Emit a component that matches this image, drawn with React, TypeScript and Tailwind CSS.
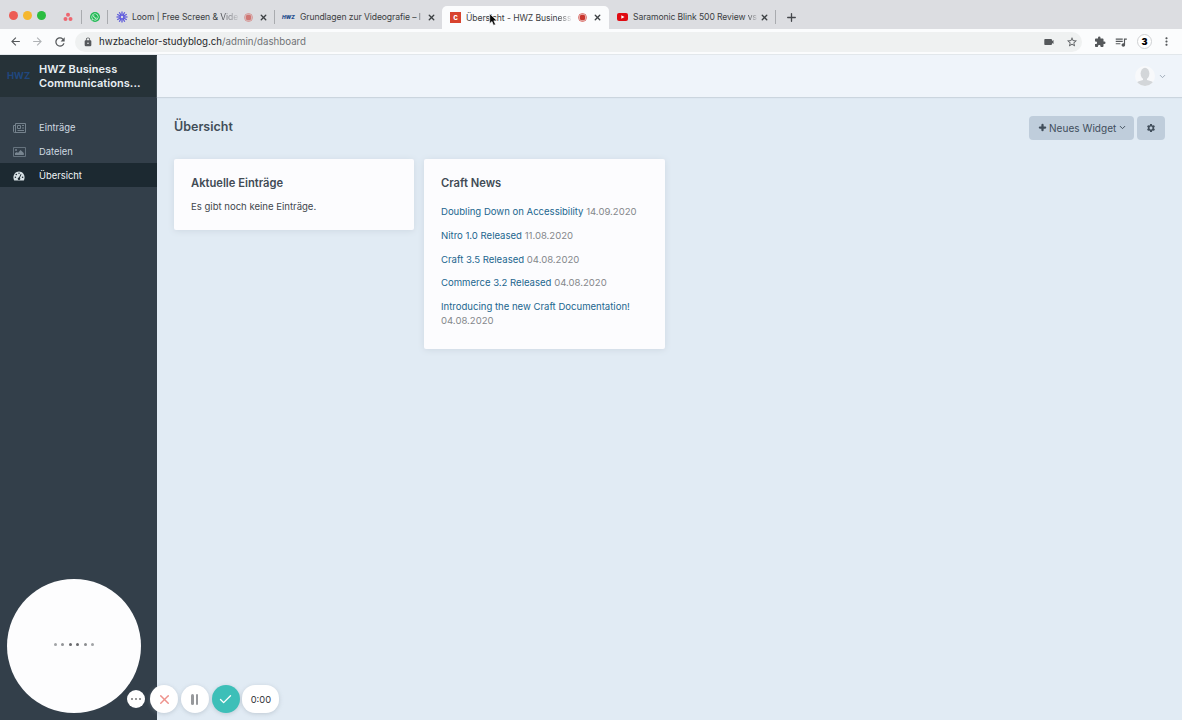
import React from "react";
import {
  MdArrowBack, MdArrowForward, MdRefresh, MdLock, MdStarBorder, MdExtension,
  MdQueueMusic, MdMoreVert, MdSettings,
} from "react-icons/md";
import { FaWhatsapp } from "react-icons/fa";
import { Check, ChevronDown, Plus, X } from "lucide-react";

const news = [
  ["Doubling Down on Accessibility", "14.09.2020"],
  ["Nitro 1.0 Released", "11.08.2020"],
  ["Craft 3.5 Released", "04.08.2020"],
  ["Commerce 3.2 Released", "04.08.2020"],
  ["Introducing the new Craft Documentation!", "04.08.2020"],
];

function Recording({ faded }: { faded?: boolean }) {
  return (
    <svg className={faded ? "size-[9px] shrink-0 opacity-60" : "size-[9px] shrink-0"} viewBox="0 0 9 9">
      <circle cx="4.5" cy="4.5" r="4" fill="none" stroke="#cf4a43" strokeWidth="0.8" />
      <circle cx="4.5" cy="4.5" r="2.9" fill="#c9352d" />
    </svg>
  );
}

function Divider() {
  return <div className="h-[14px] w-px shrink-0 bg-[#a9abaf]" />;
}

function TabClose() {
  return <X className="size-[9px] shrink-0 text-[#3c4043]" strokeWidth={3.6} />;
}

function TabText({ children, className }: { children: React.ReactNode; className: string }) {
  return (
    <span className={"shrink-0 whitespace-nowrap text-[8.6px] leading-[14px] text-[#3b3d42] " + className}>
      {children}
    </span>
  );
}

function Fade({ children }: { children: string }) {
  return <span className="bg-linear-to-r from-[#3b3d42] to-[#3b3d4220] bg-clip-text text-transparent">{children}</span>;
}

function TabBar() {
  return (
    <div className="relative flex h-[29px] shrink-0 bg-[#dcdde1] pt-[6px]">
      <div className="flex h-[22px] w-[442px] shrink-0 items-center">
        <div className="-mt-[4px] ml-[9px] flex gap-[5px]">
          <i className="size-[9px] rounded-full bg-[#ed5c55]" />
          <i className="size-[9px] rounded-full bg-[#f5b72f]" />
          <i className="size-[9px] rounded-full bg-[#2bbd40]" />
        </div>
        <svg className="ml-[17px] size-[10px]" viewBox="0 0 10 10" fill="#ed6670">
          <circle cx="5" cy="2.7" r="2" /><circle cx="2.5" cy="7.1" r="2" /><circle cx="7.5" cy="7.1" r="2" />
        </svg>
        <div className="ml-[8px]"><Divider /></div>
        <span className="ml-[8px] flex size-[10px] items-center justify-center rounded-full bg-[#20b954]">
          <FaWhatsapp className="size-[8px] text-white" />
        </span>
        <div className="ml-[7px]"><Divider /></div>
        <svg className="ml-[8px] size-[12px]" viewBox="-6 -6 12 12" stroke="#5f5bda" strokeWidth="1.3">
          {[0, 30, 60, 90, 120, 150].map((angle) => (
            <path key={angle} d="M-5.5 0H5.5" transform={`rotate(${angle})`} />
          ))}
          <circle r="2.5" fill="#625de0" stroke="none" />
          <circle r="1.2" fill="#dcdde1" stroke="none" />
        </svg>
        <TabText className="ml-[4px] w-[108px] tracking-[-0.07px]">Loom | Free Screen &amp; <Fade>Vide</Fade></TabText>
        <div className="ml-[4px] flex"><Recording faded /></div>
        <div className="ml-[6px] flex"><TabClose /></div>
        <div className="ml-[6px]"><Divider /></div>
        <span className="ml-[7px] w-[13px] text-[5px] leading-none font-black text-[#2b5290] italic">HWZ</span>
        <TabText className="ml-[5px] w-[121px] tracking-[-0.09px]">Grundlagen zur Videografie – <Fade>I</Fade></TabText>
        <div className="ml-[6px] flex"><TabClose /></div>
      </div>
      <div className="relative flex h-[23px] w-[167px] shrink-0 items-center rounded-t-[5px] bg-[#fbfcfd]">
        <span className="ml-[8px] flex size-[11px] items-center justify-center bg-[#d8432e] pb-px text-[8px] font-bold text-white">c</span>
        <TabText className="ml-[5px] w-[108px] tracking-[-0.08px]">Übersicht - HWZ Busin<Fade>ess</Fade></TabText>
        <div className="ml-[4px] flex"><Recording /></div>
        <div className="ml-[6px] flex"><TabClose /></div>
      </div>
      <div className="flex h-[22px] items-center">
        <svg className="ml-[8px] h-[8px] w-[11px]" viewBox="0 0 11 8">
          <rect width="11" height="8" rx="2" fill="#e00b12" /><path d="M4.3 2.2L7.5 4 4.3 5.8Z" fill="white" />
        </svg>
        <TabText className="ml-[5px] w-[124px] tracking-[-0.1px]">Saramonic Blink 500 Review <Fade>vs</Fade></TabText>
        <div className="ml-[3px] flex"><TabClose /></div>
        <div className="ml-[6px]"><Divider /></div>
        <Plus className="ml-[9px] size-[13px] text-[#45474c]" strokeWidth={2.4} />
      </div>
      <svg className="absolute top-[13px] left-[489px] h-[14px] w-[9px]" viewBox="0 0 9 14">
        <path d="M.7.7V10.6L3 8.5 4.5 12.3 6.5 11.4 4.8 7.8H8Z" fill="#080808" stroke="white" strokeWidth=".6" />
      </svg>
    </div>
  );
}

function Toolbar() {
  return (
    <div className="flex h-[26px] shrink-0 items-center border-b border-[#e2e7eb] bg-[#fbfcfd] text-[#55585b]">
      <MdArrowBack className="ml-[9px] size-[13px]" />
      <MdArrowForward className="ml-[9px] size-[13px] text-[#afb2b5]" />
      <MdRefresh className="ml-[9px] size-[14px]" />
      <div className="ml-[8px] flex h-[20px] w-[1007px] items-center rounded-full bg-[#eff1f1]">
        <MdLock className="ml-[8px] size-[10px]" />
        <span className="ml-[6px] pt-[1.5px] text-[9.7px] tracking-[0.01px] text-[#707376]"><span className="text-[#242629]">hwzbachelor-studyblog.ch</span>/admin/dashboard</span>
        <svg className="ml-auto h-[8px] w-[10px]" viewBox="0 0 10 8" fill="#55585b"><path d="M1 1H7Q8 1 8 2V3L9.5 2V6L8 5V6Q8 7 7 7H1Q.3 7 .3 6V2Q.3 1 1 1Z" /></svg>
        <MdStarBorder className="mr-[4px] ml-[12px] size-[12px]" />
      </div>
      <MdExtension className="ml-[12px] size-[12px]" />
      <MdQueueMusic className="ml-[8px] size-[14px]" />
      <span className="ml-[9px] flex size-[15px] items-center justify-center rounded-full border border-[#cfd1d3] bg-white text-[9px] font-black text-black">3</span>
      <MdMoreVert className="ml-[8px] size-[13px]" />
    </div>
  );
}

function NavItem({ label, icon, active }: { label: string; icon: React.ReactNode; active?: boolean }) {
  return (
    <div className={active ? "flex h-[24px] items-center bg-[#1c2931] pt-px text-[#f0f6f8]" : "flex h-[24px] items-center pt-px text-[#d0dae1]"}>
      <span className="ml-[12px] flex w-[14px] justify-center">{icon}</span>
      <span className="ml-[13px] pt-px text-[9.4px]">{label}</span>
    </div>
  );
}

function Sidebar() {
  return (
    <aside className="w-[157px] shrink-0 bg-[#333f4a]">
      <div className="flex h-[42px] items-center bg-[#263238]">
        <span className="ml-[7px] w-[24px] text-[9.5px] font-bold text-[#20477e]">HWZ</span>
        <span className="ml-[8px] text-[11px] leading-[14px] font-semibold tracking-[0.06px] whitespace-nowrap text-[#e8eff3]">HWZ Business<br />Communications...</span>
      </div>
      <nav className="pt-[18px]">
        <NavItem label="Einträge" icon={
          <svg className="h-[10px] w-[13px]" viewBox="0 0 13 10" fill="none" stroke="#75828d">
            <path d="M2.5.5H12.5V9.5H1.5Q.5 9.5.5 8.5V2.5H2.5ZM2.5 2V9" /><path d="M4.5 2.5H7.5V5.5H4.5ZM9 2.5H11M9 5H11M4.5 7.5H11" />
          </svg>
        } />
        <NavItem label="Dateien" icon={
          <svg className="h-[10px] w-[13px]" viewBox="0 0 13 10" fill="#788590">
            <path d="M.5.5H12.5V9.5H.5Z" fill="none" stroke="#66737e" /><circle cx="3" cy="3" r="1" /><path d="M2 8V6L4 5 5 6 7.5 3 10.8 6V8Z" />
          </svg>
        } />
        <NavItem active label="Übersicht" icon={
          <svg className="h-[10px] w-[12px]" viewBox="0 0 12 10">
            <path d="M1.2 9.5C-.9 5.5 1.5.5 6 .5s6.9 5 4.8 9Z" fill="#d7e1e5" />
            <g fill="#1c2931"><circle cx="2.4" cy="6.2" r=".8" /><circle cx="3.3" cy="3.5" r=".8" /><circle cx="6" cy="2.3" r=".7" /><circle cx="9.6" cy="6.2" r=".8" /><circle cx="6" cy="7.7" r="1.3" /></g>
            <path d="M6 7.7L8 3.2" stroke="#1c2931" />
          </svg>
        } />
      </nav>
    </aside>
  );
}

function RecorderControls() {
  return (
    <div className="absolute bottom-[7px] left-[7px] flex items-end">
      <div className="flex size-[134px] items-center justify-center gap-[4.6px] rounded-full bg-[#fdfdfe] pb-[3px]">
        <i className="size-[3px] rounded-full bg-[#a1a3a6]" />
        <i className="size-[3px] rounded-full bg-[#929497]" />
        <i className="size-[3px] rounded-full bg-[#68696c]" />
        <i className="size-[3px] rounded-full bg-[#68696c]" />
        <i className="size-[3px] rounded-full bg-[#8a8c8f]" />
        <i className="size-[3px] rounded-full bg-[#a1a3a6]" />
      </div>
      <div className="mb-[5px] -ml-[14px] flex size-[18px] items-center justify-center gap-[2px] rounded-full bg-white">
        <i className="size-[2px] rounded-full bg-[#777]" /><i className="size-[2px] rounded-full bg-[#777]" /><i className="size-[2px] rounded-full bg-[#777]" />
      </div>
      <div className="ml-[5px] flex gap-[2.8px]">
        <div className="flex size-[28px] items-center justify-center rounded-full bg-white shadow-[0_1px_4px_#8d99a566]"><X className="size-[15px] text-[#ee928c]" strokeWidth={2.4} /></div>
        <div className="flex size-[28px] items-center justify-center gap-[2px] rounded-full bg-white shadow-[0_1px_4px_#8d99a566]"><i className="h-[11px] w-[2.5px] rounded bg-[#97999c]" /><i className="h-[11px] w-[2.5px] rounded bg-[#97999c]" /></div>
        <div className="flex size-[28px] items-center justify-center rounded-full bg-[#3dbfb8] shadow-[0_1px_4px_#8d99a566]"><Check className="size-[15px] text-white" strokeWidth={2.2} /></div>
        <div className="flex h-[28px] w-[37px] items-center justify-center rounded-[13px] bg-white pt-px text-[9.3px] text-[#303236] shadow-[0_1px_4px_#8d99a566]">0:00</div>
      </div>
    </div>
  );
}

export default function App() {
  return (
    <div className="relative flex h-[720px] w-[1182px] flex-col overflow-hidden bg-[#e1ebf4] font-['Inter',sans-serif]">
      <TabBar />
      <Toolbar />
      <div className="flex min-h-0 grow">
        <Sidebar />
        <div className="grow">
          <header className="flex h-[42px] items-center justify-end bg-[#eff4fa] shadow-[0_1px_1px_#cbd5de]">
            <svg className="size-[20px]" viewBox="0 0 20 20">
              <defs><clipPath id="avatar"><circle cx="10" cy="10" r="10" /></clipPath></defs>
              <g clipPath="url(#avatar)"><path d="M0 0H20V20H0Z" fill="#f8f9fb" /><ellipse cx="10" cy="7.6" rx="4.4" ry="5.8" fill="#d3d6d9" /><path d="M8 11H12V14L17 15.5 20 18V20H0V18L3 15.5 8 14Z" fill="#d3d6d9" /></g>
            </svg>
            <ChevronDown className="mr-[15px] ml-[3px] size-[9px] text-[#9daab7]" strokeWidth={2.6} />
          </header>
          <main className="px-[17px]">
            <div className="flex h-[61.5px] items-center">
              <h1 className="pb-[1px] text-[12.5px] font-semibold text-[#414d58]">Übersicht</h1>
              <div className="ml-auto flex h-[24px] gap-[3px] text-[#414e5b]">
                <button className="flex w-[105px] items-center rounded-[4px] bg-[#bfcddb] pl-[9px] text-[10px] tracking-[0.05px]"><Plus className="mr-[2px] size-[9px]" strokeWidth={6} /><span className="pt-px">Neues Widget</span><ChevronDown className="ml-[2px] size-[9px]" strokeWidth={2.6} /></button>
                <button className="flex w-[28px] items-center justify-center rounded-[4px] bg-[#bfcddb]"><MdSettings className="size-[10px]" /></button>
              </div>
            </div>
            <div className="flex items-start gap-[10px]">
              <section className="h-[71.5px] w-[240px] rounded-[2px] bg-[#fcfcfe] px-[17px] pt-[16.5px] shadow-[0_1px_6px_#ced8e2]">
                <h2 className="text-[11.2px] leading-[16px] font-semibold text-[#414b55]">Aktuelle Einträge</h2>
                <p className="mt-[8.5px] text-[9.55px] leading-[14px] text-[#42474d]">Es gibt noch keine Einträge.</p>
              </section>
              <section className="h-[190px] w-[241px] rounded-[2px] bg-[#fcfcfe] px-[17px] pt-[16.5px] shadow-[0_1px_6px_#ced8e2]">
                <h2 className="text-[11.2px] leading-[16px] font-semibold text-[#414b55]">Craft News</h2>
                <div className="mt-[14px] flex flex-col gap-[9.8px] text-[9.55px] leading-[14px]">
                  {news.map(([title, date]) => <p key={title}><a className="text-[#1b668e]">{title}</a> <span className="text-[#85888c]">{date}</span></p>)}
                </div>
              </section>
            </div>
          </main>
        </div>
      </div>
      <RecorderControls />
    </div>
  );
}
